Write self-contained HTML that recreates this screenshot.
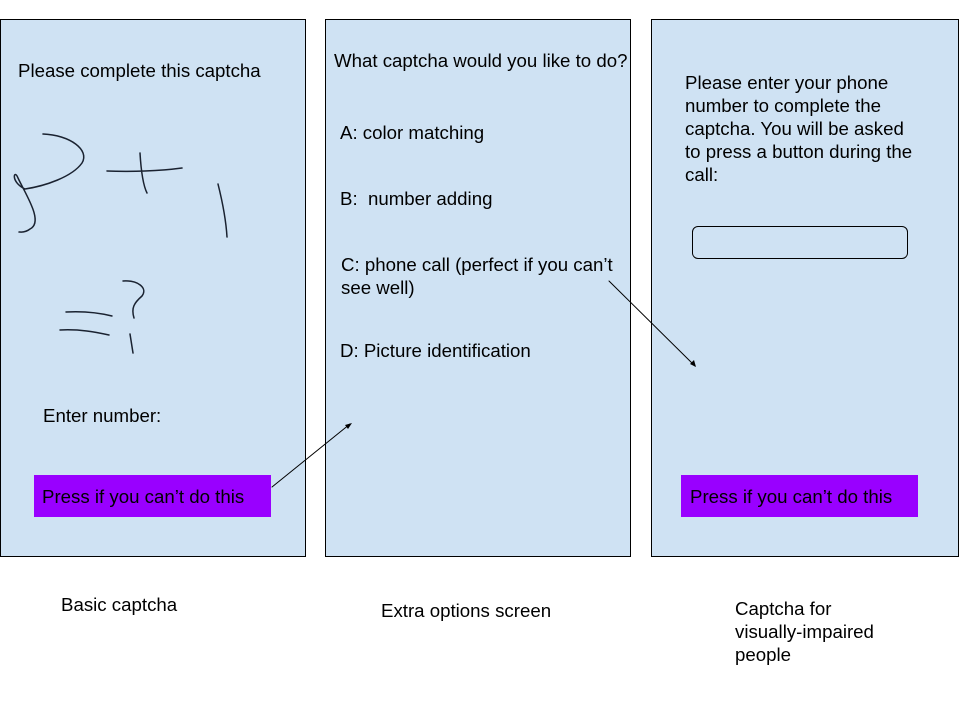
<!DOCTYPE html>
<html><head><style>
body{margin:0;width:960px;height:720px;background:#fff;position:relative;font-family:"Liberation Sans",sans-serif;color:#000;overflow:hidden}
.p{position:absolute;top:19px;height:538px;background:#cfe2f3;border:1px solid #000;box-sizing:border-box}
.t{position:absolute;font-size:18.67px;line-height:21px;white-space:nowrap}
.btn{position:absolute;background:#9900ff;height:42px;top:475px}
</style></head><body>
<div class="p" style="left:0;width:306px"></div>
<div class="p" style="left:325px;width:306px"></div>
<div class="p" style="left:651px;width:308px"></div>
<div class="btn" style="left:34px;width:237px"></div>
<div class="btn" style="left:681px;width:237px"></div>
<div style="position:absolute;left:692px;top:226px;width:214px;height:31px;border:1px solid #000;border-radius:6px;background:#cfe2f3"></div>

<div class="t" style="left:18px;top:60px">Please complete this captcha</div>
<div class="t" style="left:43px;top:405px">Enter number:</div>
<div class="t" style="left:42px;top:486px">Press if you can’t do this</div>

<div class="t" style="left:334px;top:50px">What captcha would you like to do?</div>
<div class="t" style="left:340px;top:122px">A: color matching</div>
<div class="t" style="left:340px;top:188px">B:&nbsp; number adding</div>
<div class="t" style="left:341px;top:253px;line-height:23px">C: phone call (perfect if you can’t<br>see well)</div>
<div class="t" style="left:340px;top:340px">D: Picture identification</div>

<div class="t" style="left:685px;top:71px;line-height:23px">Please enter your phone<br>number to complete the<br>captcha. You will be asked<br>to press a button during the<br>call:</div>
<div class="t" style="left:690px;top:486px">Press if you can’t do this</div>

<div class="t" style="left:61px;top:594px">Basic captcha</div>
<div class="t" style="left:381px;top:600px">Extra options screen</div>
<div class="t" style="left:735px;top:597px;line-height:23px">Captcha for<br>visually-impaired<br>people</div>

<svg width="960" height="720" style="position:absolute;left:0;top:0" fill="none" stroke="#1a2230" stroke-width="1.5" stroke-linecap="round">
<path d="M43 134 C70 135 90 150 82 163 C72 177 45 186 25 189 C10 182 14 168 18 178 C26 195 44 222 30 229 C25 233 21 232 19 232"/>
<path d="M107 171 C130 172 160 171 182 168 M140 153 C141 170 143 185 147 193"/>
<path d="M218 184 C222 200 226 220 227 237"/>
<path d="M66 312 C85 311 100 313 112 316 M60 330 C80 329 95 332 109 335"/>
<path d="M123 281 C138 280 148 288 142 296 C134 303 131 308 134 318 M130 334 L133 353"/>
<g stroke="#000" stroke-width="1">
<path d="M272 487 L350 424"/><path d="M609 281 L695 366"/>
</g>
<polygon points="352,423 345,425 348,429" fill="#000" stroke="none"/>
<polygon points="696,367 690,364 694,360" fill="#000" stroke="none"/>
</svg>
</body></html>
